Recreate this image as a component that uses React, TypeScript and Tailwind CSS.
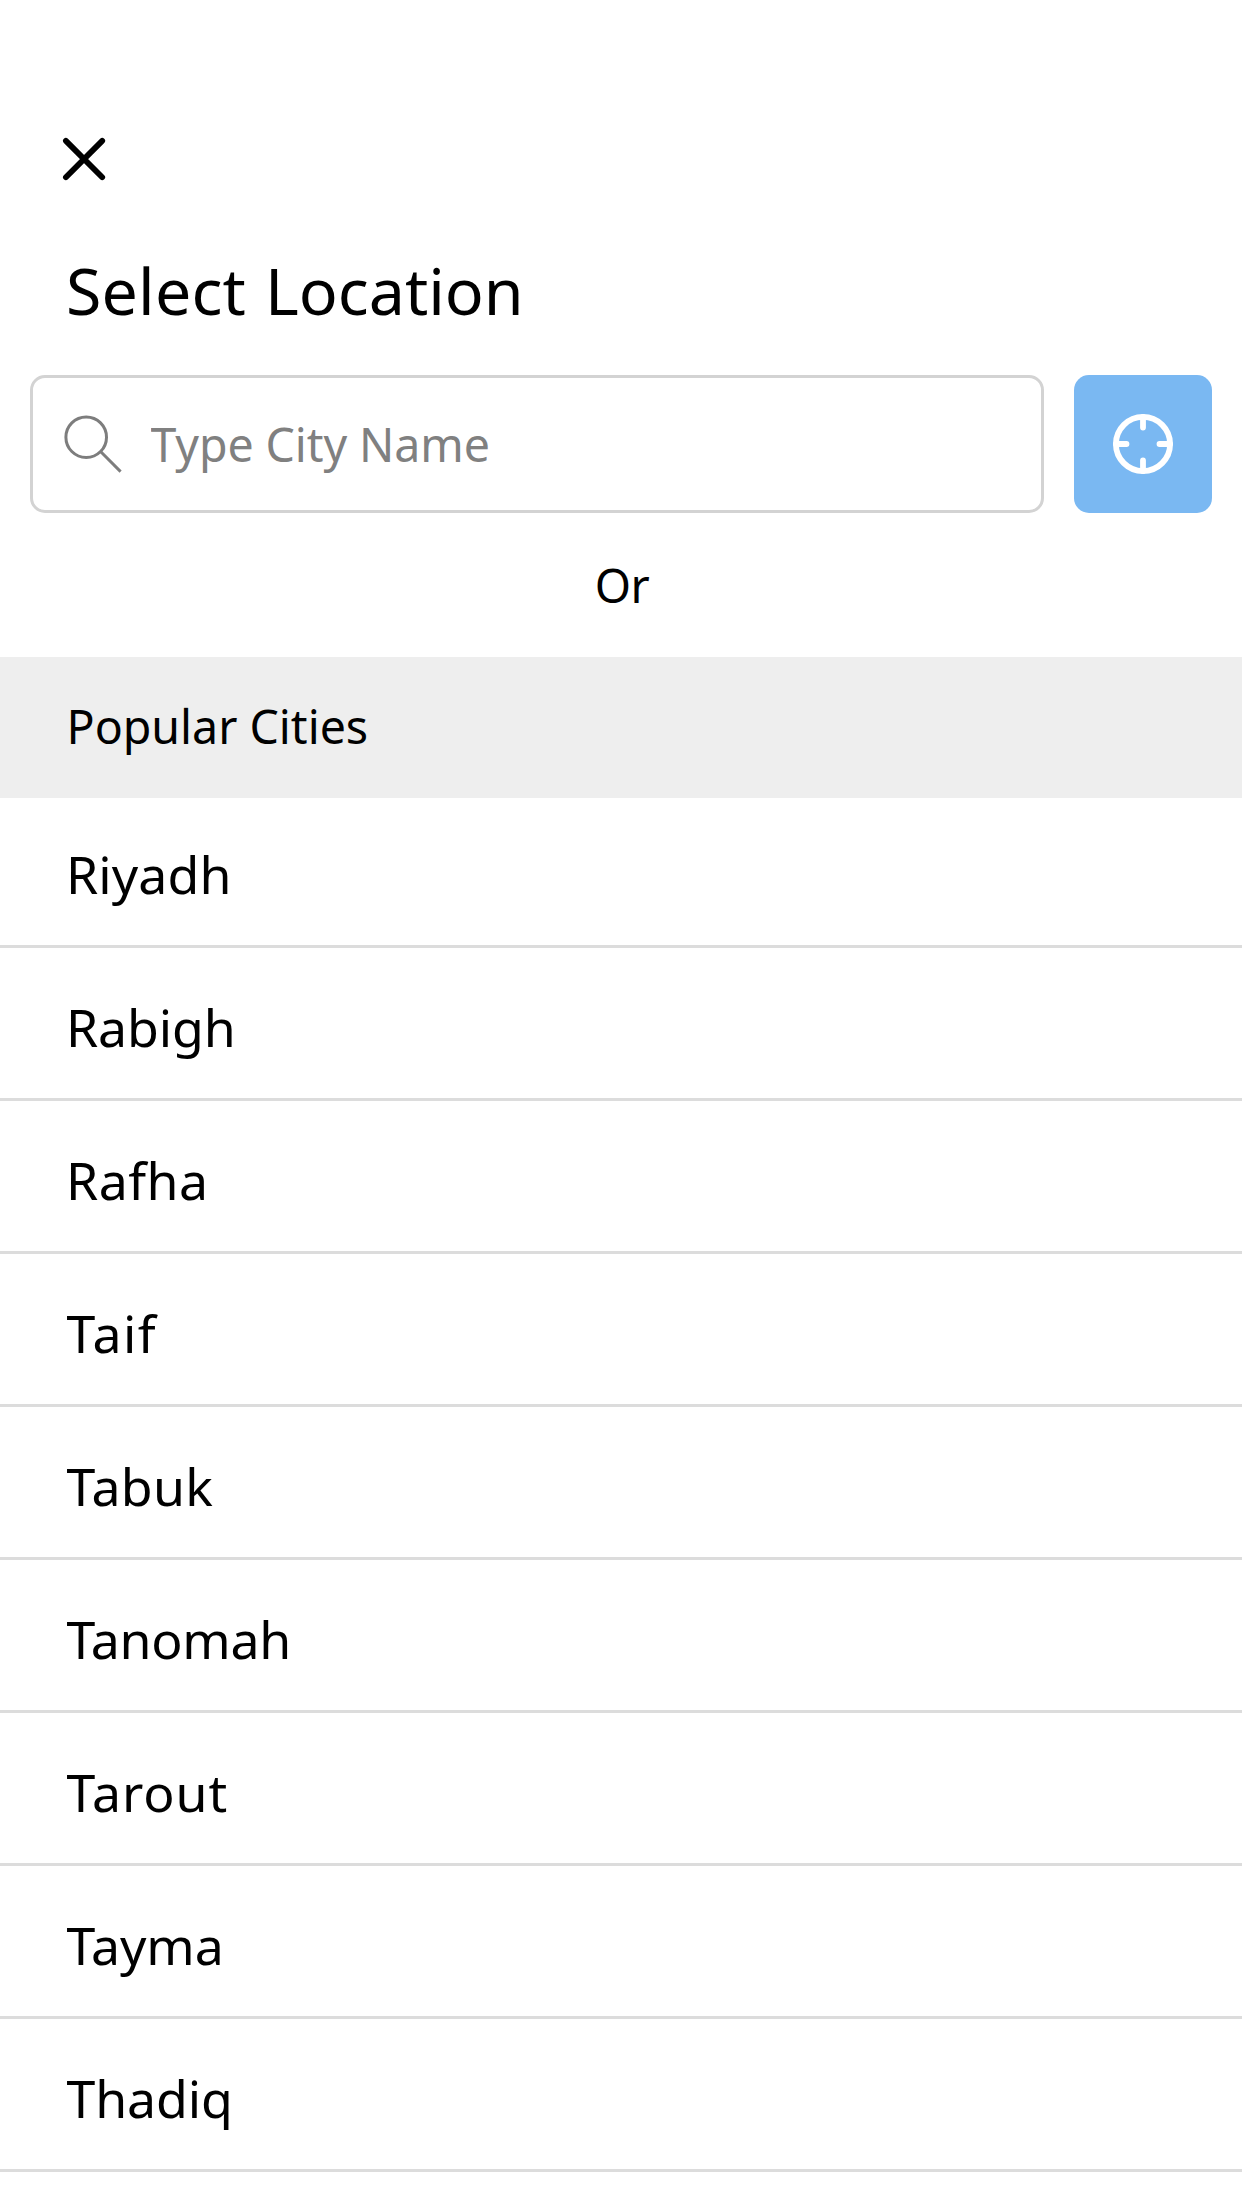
const cities = [
  { name: "Riyadh", style: "pl-[66px] tracking-[0.1px]" },
  { name: "Rabigh", style: "pl-[66px] tracking-[-0.1px]" },
  { name: "Rafha", style: "pl-[66px] tracking-[0.45px]" },
  { name: "Taif", style: "pl-[66.5px] tracking-[1.4px]" },
  { name: "Tabuk", style: "pl-[66.5px] tracking-[0.3px]" },
  { name: "Tanomah", style: "pl-[66.5px] tracking-[-0.3px]" },
  { name: "Tarout", style: "pl-[66.5px] tracking-[0.9px]" },
  { name: "Tayma", style: "pl-[66.5px] tracking-[-0.1px]" },
  { name: "Thadiq", style: "pl-[66.5px] tracking-[-0.1px]" },
];

function CloseIcon() {
  return (
    <svg className="h-[48px] w-[48px]" viewBox="0 0 48 48" fill="none" stroke="currentColor" strokeWidth="5.8" strokeLinecap="round">
      <path d="M5.9 5.9 42.2 42.2M42.2 5.9 5.9 42.2" />
    </svg>
  );
}

function SearchIcon() {
  return (
    <svg className="h-[60px] w-[60px] shrink-0" viewBox="0 0 60 60" fill="none" stroke="currentColor" strokeWidth="3">
      <circle cx="23.2" cy="23.2" r="20.3" />
      <path d="M37.8 37.8 57.6 57.6" />
    </svg>
  );
}

function CrosshairIcon() {
  return (
    <svg className="h-[60px] w-[60px]" viewBox="0 0 60 60" fill="none" stroke="currentColor" strokeWidth="5.8" strokeLinecap="round">
      <circle cx="30" cy="30" r="27.1" />
      <path d="M30 3v10.5M30 57V46.5M3 30h10.5M57 30H46.5" />
    </svg>
  );
}

export default function App() {
  return (
    <main className="flex h-[2208px] w-[1242px] flex-col overflow-hidden bg-white font-['Noto_Sans',sans-serif] text-black">
      <header className="flex flex-col pt-[135px]">
        <button type="button" aria-label="Close" className="ml-[60px] w-fit">
          <CloseIcon />
        </button>
        <h1 className="mt-[63px] pl-[66px] text-[64.5px] leading-[88px] tracking-[0.16px]">
          Select <span className="ml-[2px] tracking-[0px]">Location</span>
        </h1>
      </header>

      <div className="mt-[41px] flex gap-[30px] px-[30px]">
        <label className="flex h-[138px] flex-1 items-center rounded-[15px] border-[3px] border-[#d3d3d3] pl-[30px]">
          <span className="text-[#7d7d7d]">
            <SearchIcon />
          </span>
          <input
            type="text"
            placeholder="Type City Name"
            className="ml-[27.5px] h-16 min-w-0 flex-1 bg-transparent text-[46.5px] leading-[64px] tracking-[-0.1px] outline-none placeholder:text-[#808080]"
          />
        </label>
        <button type="button" aria-label="Use current location" className="flex h-[138px] w-[138px] items-center justify-center rounded-[15px] bg-[#7ab8f2] text-white">
          <CrosshairIcon />
        </button>
      </div>

      <p className="mt-10 pl-[2px] text-center text-[46.5px] leading-[64px] tracking-[-0.5px]">Or</p>

      <h2 className="mt-10 h-[141px] shrink-0 bg-[#eeeeee] pt-[37px] pl-[66.5px] text-[46.5px] leading-[64px]">Popular Cities</h2>

      <ul className="text-[51.8px] leading-[70px]">
        {cities.map((city) => (
          <li key={city.name} className={`flex h-[153px] items-end border-b-[3px] border-[#dcdcdc] pb-9 first:h-[150px] ${city.style}`}>
            {city.name}
          </li>
        ))}
      </ul>
    </main>
  );
}
